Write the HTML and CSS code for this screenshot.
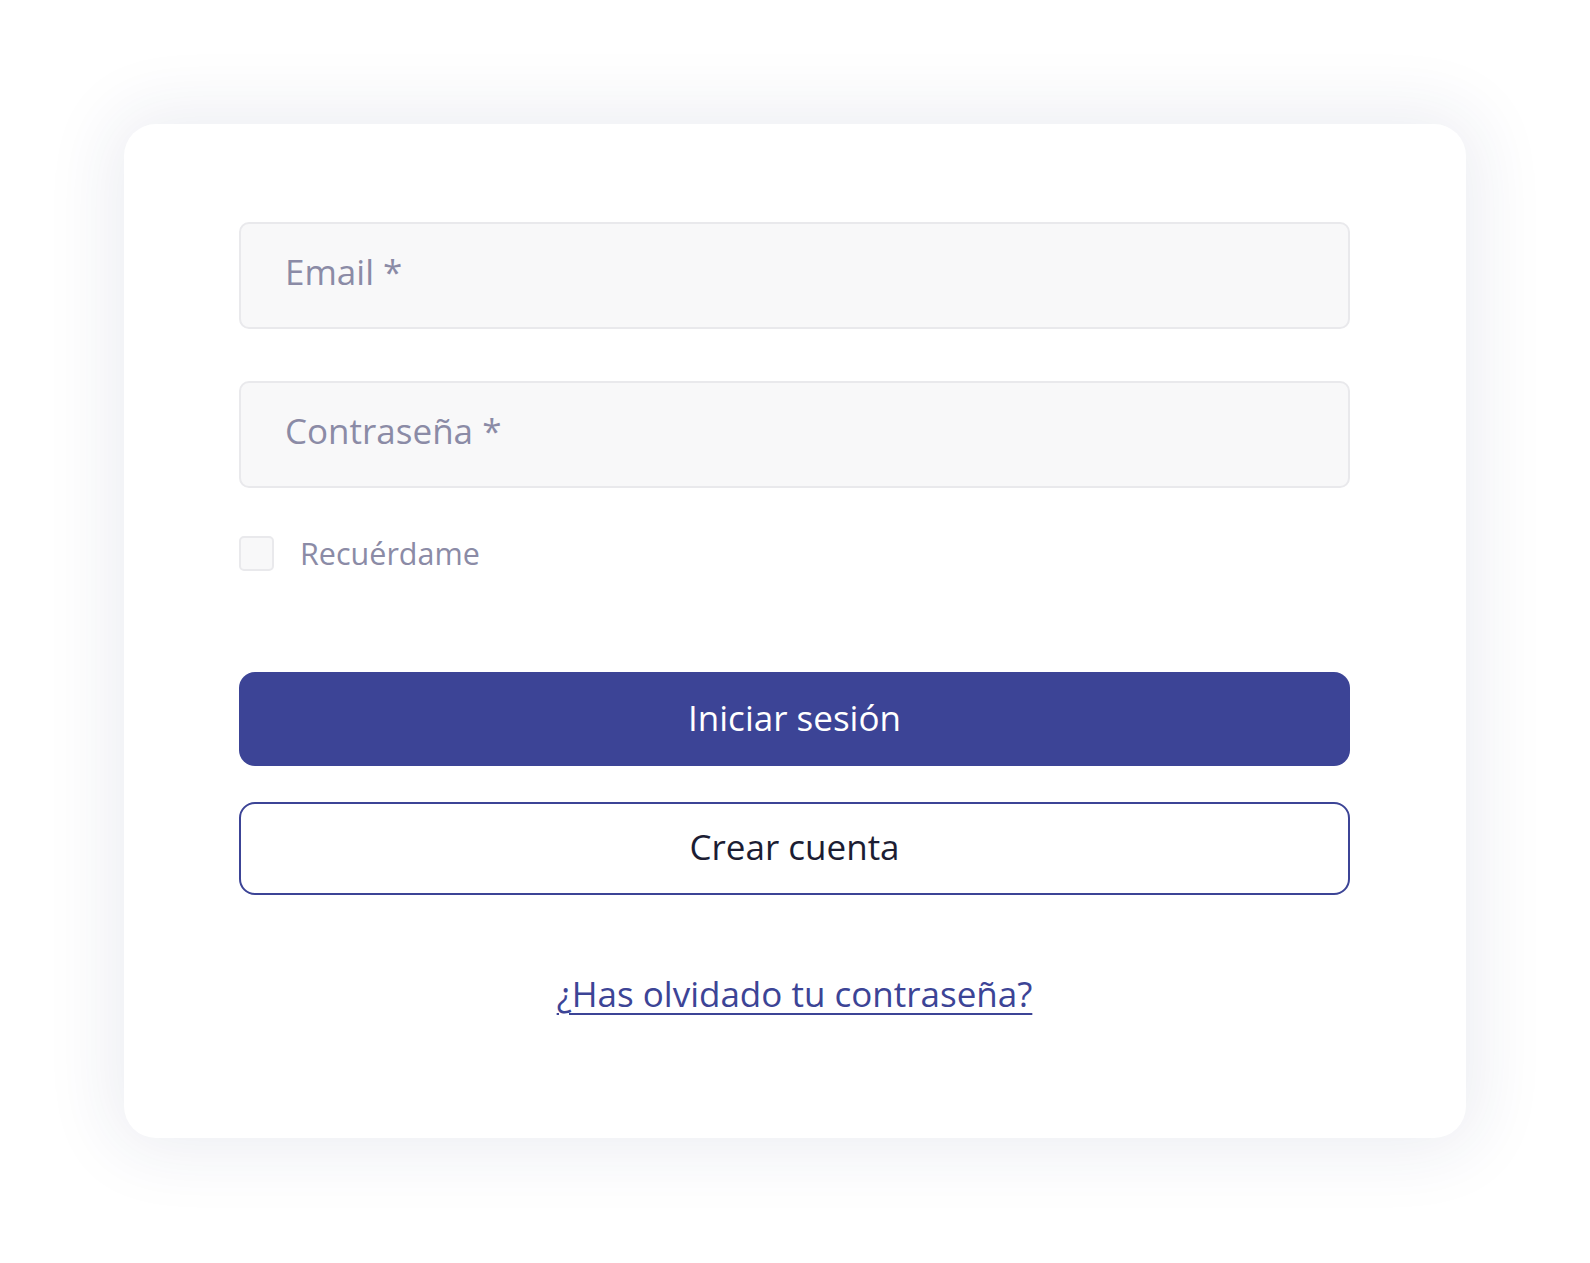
FILE: index.html
```html
<!DOCTYPE html>
<html lang="es">
<head>
<meta charset="utf-8">
<title>Iniciar sesión</title>
<link rel="stylesheet" href="styles.css">
</head>
<body>
<main class="page">
  <form class="card">
    <input class="field" type="email" placeholder="Email *">
    <input class="field field-gap" type="password" placeholder="Contraseña *">
    <label class="remember">
      <span class="box"></span>
      <span class="remember-text">Recuérdame</span>
    </label>
    <button type="button" class="btn btn-primary">Iniciar sesión</button>
    <button type="button" class="btn btn-outline">Crear cuenta</button>
    <div class="forgot-row">
      <a class="forgot" href="#">¿Has olvidado tu contraseña?</a>
    </div>
  </form>
</main>
</body>
</html>
```
FILE: styles.css
```css
* { box-sizing: border-box; }
html, body {
  margin: 0;
  padding: 0;
  background: #ffffff;
  font-family: "Open Sans", "Noto Sans", sans-serif;
}
.page {
  width: 1590px;
  height: 1263px;
  padding: 124px 124px 0 124px;
}
.card {
  width: 1342px;
  height: 1014px;
  background: #ffffff;
  border-radius: 32px;
  box-shadow: 0 0 70px 12px rgba(40, 50, 110, 0.085);
  padding: 98px 116px 0 115px;
  display: flex;
  flex-direction: column;
}
.field {
  display: block;
  width: 100%;
  height: 107px;
  border: 2px solid #e9e9ec;
  background: #f8f8f9;
  border-radius: 10px;
  padding: 0 44px 8px 44px;
  font-family: inherit;
  font-size: 35px;
  color: #3a3a55;
  outline: none;
}
.field::placeholder { color: #8b8ba6; opacity: 1; }
.field-gap { margin-top: 52px; }
.remember {
  margin-top: 48px;
  display: flex;
  align-items: center;
  height: 35px;
}
.box {
  width: 35px;
  height: 35px;
  border: 2px solid #e9e9ec;
  background: #f8f8f9;
  border-radius: 5px;
  flex: none;
}
.remember-text {
  margin-left: 26px;
  font-size: 30.5px;
  color: #8b8ba6;
  line-height: 1;
  position: relative;
  top: 0;
}
.btn {
  display: block;
  width: 100%;
  font-family: inherit;
  font-size: 35px;
  border-radius: 16px;
  cursor: pointer;
  padding: 0 0 4px 0;
}
.btn-primary {
  margin-top: 101px;
  height: 94px;
  background: #3c4496;
  border: none;
  color: #ffffff;
}
.btn-outline {
  margin-top: 36px;
  height: 93px;
  background: #ffffff;
  border: 2px solid #3c4496;
  color: #1c1d33;
}
.forgot-row {
  margin-top: 74px;
  text-align: center;
}
.forgot {
  font-size: 35px;
  line-height: 1.4;
  color: #3c4496;
  text-decoration: underline;
  text-decoration-thickness: 2px;
  text-underline-offset: 6px;
}
```
